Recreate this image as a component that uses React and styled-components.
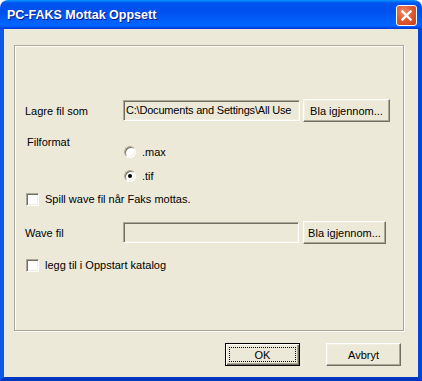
import React from "react";
import styled, { createGlobalStyle } from "styled-components";

const GlobalStyle = createGlobalStyle`
   body {
      margin: 0;
      font-family: "Liberation Sans", "DejaVu Sans", Arial, sans-serif;
      font-size: 11px;
      color: #000;
   }
`;

const Window = styled.div`
   width: 422px;
   height: 381px;
   display: flex;
   flex-direction: column;
   box-sizing: border-box;
`;

const TitleBar = styled.div`
   height: 29px;
   flex: none;
   box-sizing: border-box;
   display: flex;
   align-items: center;
   justify-content: space-between;
   padding: 1px 5px 0 7px;
   border-radius: 8px 8px 0 0;
   background: linear-gradient(
      180deg,
      #0997ff 0%,
      #0053ee 10%,
      #0050ee 40%,
      #0066ff 86%,
      #005bff 92%,
      #003dd7 97%,
      #003dd7 100%
   );
`;

const Title = styled.div`
   color: #fff;
   font-family: "Liberation Sans", "DejaVu Sans", sans-serif;
   font-weight: bold;
   font-size: 12.5px;
   text-shadow: 1px 1px 0 #0a1883;
`;

const CloseButton = styled.div`
   width: 21px;
   height: 21px;
   box-sizing: border-box;
   border: 1px solid #fff;
   border-radius: 3px;
   background: radial-gradient(circle at 35% 30%, #f08a66 0%, #e05a36 45%, #c8401c 100%);
   display: flex;
   align-items: center;
   justify-content: center;
`;

const Body = styled.div`
   flex: 1;
   background: #ece9d8;
   border: 4px solid #0055e5;
   border-top: none;
   border-left-color: #0a58e8;
   border-right-color: #0047d8;
   border-bottom-color: #0036c0;
   padding: 16px 0 11px 10px;
   display: flex;
   flex-direction: column;
`;

const Frame = styled.div`
   width: 390px;
   height: 286px;
   box-sizing: border-box;
   border: 1px solid #aca899;
   box-shadow: inset 1px 1px 0 #fff, 1px 1px 0 #fff;
   padding: 53px 0 0 10px;
   display: flex;
   flex-direction: column;
`;

const Row = styled.div`
   display: flex;
   align-items: center;
   height: 23px;
   margin-top: ${(props) => props.$top || 0}px;
`;

const Label = styled.div`
   width: 98px;
   flex: none;
   padding-left: ${(props) => props.$indent || 0}px;
   box-sizing: border-box;
   line-height: 14px;
`;

const Field = styled.div`
   width: ${(props) => props.$width}px;
   height: 21px;
   flex: none;
   margin-right: ${(props) => props.$gap}px;
   box-sizing: border-box;
   border: 1px solid;
   border-color: #aca899 #fff #fff #aca899;
   box-shadow: inset 1px 1px 0 #716f64, inset -1px -1px 0 #f1efe2;
   background: #ece9d8;
   padding: 0 2px 0 2px;
   line-height: 19px;
   letter-spacing: -0.2px;
   white-space: nowrap;
   overflow: hidden;
`;

const Button = styled.div`
   width: ${(props) => props.$width}px;
   height: 23px;
   flex: none;
   box-sizing: border-box;
   background: #ece9d8;
   border: 1px solid;
   border-color: ${(props) => (props.$default ? "#000" : "#fff #716f64 #716f64 #fff")};
   box-shadow: ${(props) =>
      props.$default
         ? "inset 1px 1px 0 #fff, inset -1px -1px 0 #716f64, inset -2px -2px 0 #aca899"
         : "inset -1px -1px 0 #aca899, inset 1px 1px 0 #f1efe2"};
   display: flex;
   align-items: center;
   justify-content: center;
   position: relative;
`;

const Focus = styled.span`
   position: absolute;
   inset: 3px;
   border: 1px dotted #000;
`;

const Format = styled.div`
   display: flex;
   margin-top: 13px;
`;

const RadioList = styled.div`
   display: flex;
   flex-direction: column;
   gap: 8px;
   padding-top: 9px;
`;

const RadioRow = styled.div`
   display: flex;
   align-items: center;
   height: 16px;
   gap: 6px;
   padding-left: 1px;
`;

const RadioCircle = styled.span`
   width: 12px;
   height: 12px;
   box-sizing: border-box;
   border-radius: 50%;
   border: 1px solid;
   border-color: #aca899 #fff #fff #aca899;
   box-shadow: inset 1px 1px 0 #716f64, inset -1px -1px 0 #f1efe2;
   background: #fff;
   display: flex;
   align-items: center;
   justify-content: center;

   &::after {
      content: "";
      width: 4px;
      height: 4px;
      border-radius: 50%;
      background: ${(props) => (props.$checked ? "#000" : "transparent")};
   }
`;

const CheckRow = styled.div`
   display: flex;
   align-items: center;
   height: 16px;
   gap: 6px;
   padding-left: 1px;
   margin-top: ${(props) => props.$top}px;
`;

const CheckBox = styled.span`
   width: 13px;
   height: 13px;
   box-sizing: border-box;
   border: 1px solid;
   border-color: #aca899 #fff #fff #aca899;
   box-shadow: inset 1px 1px 0 #716f64, inset -1px -1px 0 #f1efe2;
   background: #fff;
`;

const Footer = styled.div`
   display: flex;
   justify-content: flex-end;
   gap: 26px;
   margin-top: 12px;
   padding-right: 17px;
`;

const App = () => {
   return (
      <>
         <GlobalStyle />
         <Window>
            <TitleBar>
               <Title>PC-FAKS Mottak Oppsett</Title>
               <CloseButton>
                  <svg width="11" height="11" viewBox="0 0 11 11">
                     <path d="M1.5 1.5 L9.5 9.5 M9.5 1.5 L1.5 9.5" stroke="#fff" strokeWidth="2.4" strokeLinecap="square" />
                  </svg>
               </CloseButton>
            </TitleBar>
            <Body>
               <Frame>
                  <Row>
                     <Label>Lagre fil som</Label>
                     <Field $width={177} $gap={3}>C:\Documents and Settings\All Use</Field>
                     <Button $width={87}>Bla igjennom...</Button>
                  </Row>
                  <Format>
                     <Label $indent={2}>Filformat</Label>
                     <RadioList>
                        <RadioRow>
                           <RadioCircle />
                           <span>.max</span>
                        </RadioRow>
                        <RadioRow>
                           <RadioCircle $checked />
                           <span>.tif</span>
                        </RadioRow>
                     </RadioList>
                  </Format>
                  <CheckRow $top={7}>
                     <CheckBox />
                     <span>Spill wave fil når Faks mottas.</span>
                  </CheckRow>
                  <Row $top={14}>
                     <Label>Wave fil</Label>
                     <Field $width={176} $gap={4} />
                     <Button $width={83}>Bla igjennom...</Button>
                  </Row>
                  <CheckRow $top={13}>
                     <CheckBox />
                     <span>legg til i Oppstart katalog</span>
                  </CheckRow>
               </Frame>
               <Footer>
                  <Button $width={75} $default>
                     <Focus />
                     OK
                  </Button>
                  <Button $width={75}>Avbryt</Button>
               </Footer>
            </Body>
         </Window>
      </>
   );
};

export default App;
